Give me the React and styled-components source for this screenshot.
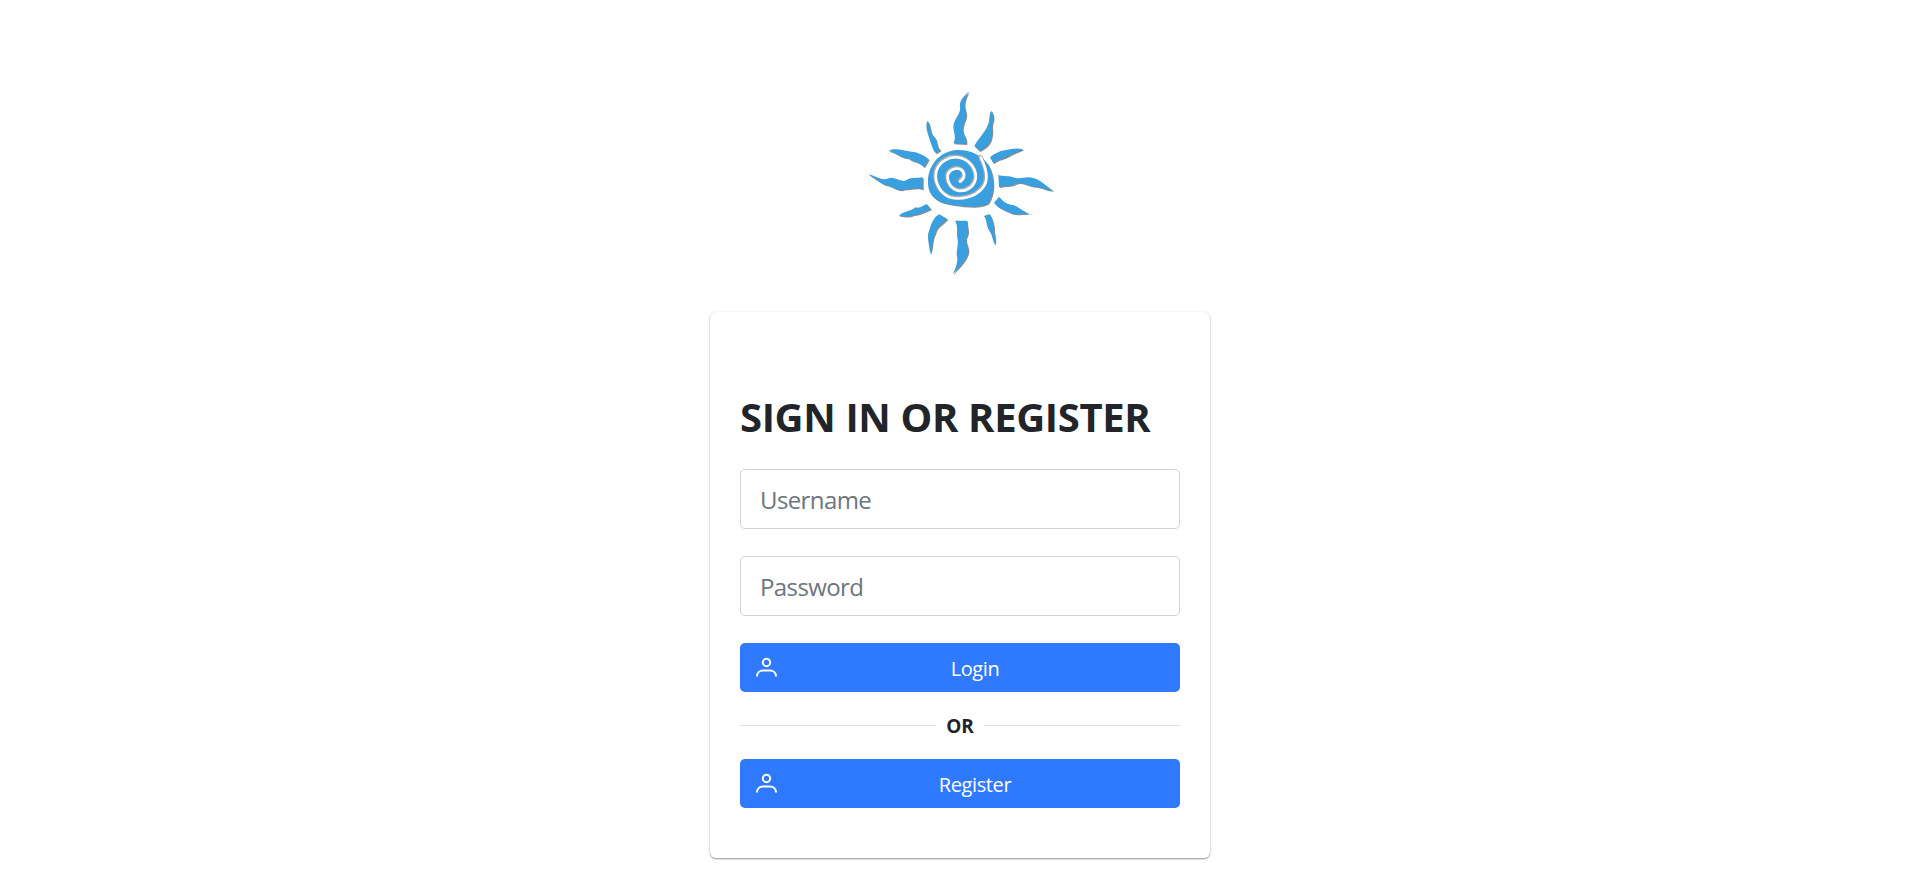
import React from "react";
import styled, { createGlobalStyle } from "styled-components";

const Global = createGlobalStyle`
  html, body { margin: 0; padding: 0; background: #fff; }
  body { font-family: "Open Sans", "Noto Sans", sans-serif; color: #212529; }
`;

const Page = styled.main`
  display: flex;
  flex-direction: column;
  align-items: center;
  padding-top: 70px;
  height: 876px;
  box-sizing: border-box;
  overflow: hidden;
`;

const LogoMark = styled.svg`
  display: block;
  width: 220px;
  height: 220px;
  margin-bottom: 22px;
  filter: drop-shadow(1.3px 1.3px 0.5px rgba(90, 90, 90, 0.7));
`;

const Card = styled.section`
  box-sizing: border-box;
  width: 500px;
  height: 546px;
  padding: 81px 30px 0;
  background: #fff;
  border-radius: 6px;
  box-shadow: 0 1px 2px rgba(0, 0, 0, 0.42), 0 0 2px rgba(0, 0, 0, 0.05);
`;

const Heading = styled.h1`
  margin: 0 0 28px;
  font-size: 40px;
  line-height: 48px;
  font-weight: 700;
  letter-spacing: -0.35px;
  white-space: nowrap;
`;

const Field = styled.input`
  display: block;
  box-sizing: border-box;
  width: 100%;
  height: 60px;
  margin-bottom: 27px;
  padding: 0 19px;
  border: 1px solid #ced4da;
  border-radius: 5px;
  background: #fff;
  font: 400 24px "Open Sans", sans-serif;
  letter-spacing: -0.6px;
  color: #212529;
  outline: none;
  &::placeholder { color: #6c757d; opacity: 1; }
`;

const ActionButton = styled.button`
  position: relative;
  display: block;
  width: 100%;
  height: 49px;
  padding: 2px 0 0 30px;
  border: 0;
  border-radius: 5px;
  background: #2f79ff;
  color: #fff;
  font: 400 20px "Open Sans", sans-serif;
  letter-spacing: -0.4px;
  text-align: center;
`;

const ButtonIcon = styled.svg`
  position: absolute;
  left: 16px;
  top: 14px;
  width: 22px;
  height: 20px;
`;

const Divider = styled.div`
  display: flex;
  align-items: center;
  height: 67px;
  gap: 10px;
  font-size: 19px;
  font-weight: 700;
  color: #212529;
  &::before, &::after {
    content: "";
    flex: 1;
    height: 1px;
    background: #dfdfdf;
  }
`;

const rays = [
  "M357 62C345 78 328 88 330 108C334 128 318 140 311 162C306 180 322 200 310 220L348 222C354 204 336 194 338 174C342 150 354 142 346 120C340 102 346 84 357 62Z",
  "M424 122C414 138 422 152 412 168C406 186 386 204 373 228L388 243C406 234 422 222 425 200C430 178 422 172 430 150C432 138 428 130 424 122Z",
  "M520 238C498 232 472 240 452 243C440 250 430 252 420 262L430 280C444 266 462 268 476 258C490 248 506 246 520 238Z",
  "M610 362C590 352 576 332 552 325C532 316 512 330 490 322C474 316 460 320 445 315L447 352C464 344 480 352 496 342C516 332 532 350 556 350C576 352 590 362 610 362Z",
  "M548 433C526 432 510 412 490 405C470 404 456 392 447 380L432 398C444 414 462 420 480 428C500 438 526 428 548 433Z",
  "M402 438C412 452 408 470 420 485C428 498 428 510 434 524C440 506 430 490 432 470C428 456 428 446 418 432Z",
  "M315 452C326 470 318 490 323 510C326 528 316 545 322 565C322 585 315 598 308 613C322 596 346 576 354 550C360 530 342 520 350 500C360 482 348 466 352 452Z",
  "M268 433C250 442 244 462 238 480C228 500 240 530 240 553C250 532 244 510 256 490C258 472 278 462 292 447Z",
  "M146 437C164 422 182 426 196 412C210 416 220 406 230 402L243 418C226 424 206 436 190 435C174 444 160 436 146 437Z",
  "M55 313C74 316 94 334 116 325C136 318 150 340 170 330C184 320 204 326 218 322L218 358C200 350 184 358 164 358C144 368 126 346 105 345C88 338 72 324 55 313Z",
  "M115 243C136 232 160 242 185 245C204 246 226 258 236 268L222 292C208 274 190 278 175 265C154 266 136 246 115 243Z",
  "M232 152C224 174 236 194 240 212C246 226 248 240 258 250L272 240C256 230 266 212 250 198C238 184 244 168 232 152Z",
];

const channel = "M390 260C408 296 414 330 395 352C372 380 330 388 298 380C268 368 250 335 256 303C264 272 296 256 322 260C352 264 376 290 375 320C372 346 350 362 325 360C302 356 288 335 291 312C296 296 318 288 332 297C344 306 342 324 328 332";

const SunLogo = () => (
  <LogoMark viewBox="0 0 660 660" aria-label="Logo">
    <g fill="#3a9fdf">
      {rays.map((d) => <path key={d} d={d} />)}
      <path d="M320 240C360 238 395 255 415 285C435 320 435 370 415 400C395 415 350 410 310 405C270 400 235 385 234 340C232 290 265 245 320 240Z" />
    </g>
    <path d={channel} fill="none" stroke="#a9abad" strokeWidth="11" strokeLinecap="round" />
    <path d={channel} fill="none" stroke="#fff" strokeWidth="8" strokeLinecap="round" transform="translate(2.5 2.5)" />
  </LogoMark>
);

const UserIcon = () => (
  <ButtonIcon viewBox="0 0 22 20" fill="none" stroke="#fff" strokeWidth="2" strokeLinecap="butt">
    <circle cx="10.5" cy="5.5" r="3.7" />
    <path d="M1 19.5C1 16 3.5 13.5 7 13.5H14C17.5 13.5 20 16 20 19.5" />
  </ButtonIcon>
);

export default function App() {
  return (
    <Page>
      <Global />
      <SunLogo />
      <Card>
        <Heading>SIGN IN OR REGISTER</Heading>
        <Field placeholder="Username" />
        <Field type="password" placeholder="Password" />
        <ActionButton><UserIcon />Login</ActionButton>
        <Divider>OR</Divider>
        <ActionButton><UserIcon />Register</ActionButton>
      </Card>
    </Page>
  );
}
